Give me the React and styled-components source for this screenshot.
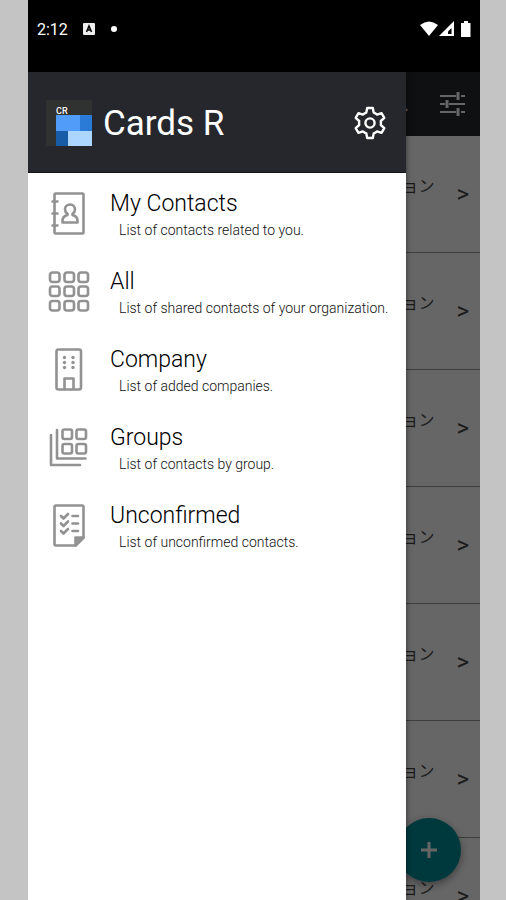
import React from 'react'
import styled, { createGlobalStyle } from 'styled-components'

const menu = [
  { id: 'contacts', title: 'My Contacts', text: 'List of contacts related to you.' },
  { id: 'all', title: 'All', text: 'List of shared contacts of your organization.' },
  { id: 'company', title: 'Company', text: 'List of added companies.' },
  { id: 'groups', title: 'Groups', text: 'List of contacts by group.' },
  { id: 'unconfirmed', title: 'Unconfirmed', text: 'List of unconfirmed contacts.' }
]

const rows = [1, 2, 3, 4, 5, 6, 7]

const icons = {
  contacts: (
    <>
      <rect x='6.5' y='1.5' width='29' height='40' rx='1' />
      <path d='M4.5 9.5h5M4.5 21.5h5M4.5 33.5h5' />
      <path d='M14.5 30.5v-2c0-3 1.500-4.500 5-5.500v-1.200c-1.800-1.200-2.500-2.600-2.500-4.300 0-3 2-5 5-5s5 2 5 5c0 1.700-.7 3.100-2.500 4.300V23c3.500 1 5 2.500 5 5.500v2z' />
    </>
  ),
  all: [2.5, 16.5, 31].map(y => [2, 16.5, 30.5].map(x => (
    <rect key={`${x}-${y}`} x={x} y={y} width='9.5' height='9.5' rx='2.5' />
  ))),
  company: (
    <>
      <rect x='8.5' y='1.5' width='24.5' height='40' rx='2' />
      <path d='M16.5 41V30.5h9V41' />
      <g fill='#929292' stroke='none'>
        {[9.5, 14.5, 19.5].map(y => [16.5, 25].map(x => (
          <circle key={`${x}-${y}`} cx={x} cy={y} r='1.7' />
        )))}
      </g>
    </>
  ),
  groups: (
    <>
      {[3.5, 18].map(y => [14.5, 28.5].map(x => (
        <rect key={`${x}-${y}`} x={x} y={y} width='9.5' height='9.5' rx='2' />
      )))}
      <path d='M9 4v28.500h28.500M3 9v30h29' />
    </>
  ),
  unconfirmed: (
    <>
      <path d='M8 1.500h26a1.500 1.500 0 0 1 1.500 1.500v30.500l-8 8H8A1.500 1.500 0 0 1 6.500 40V3A1.500 1.500 0 0 1 8 1.500z' />
      <path d='M35.500 33.500h-8v8z' fill='#929292' />
      {[12, 19.5, 27].map(y => (
        <path key={y} d={`M13 ${y}l2.500 2.500 4.500-4.500M24.500 ${y}h5.500`} />
      ))}
    </>
  )
}

const MenuIcon = ({ name }) => (
  <IconSvg viewBox='0 0 44 44' aria-hidden='true'>{icons[name]}</IconSvg>
)

const Logo = () => (
  <LogoSvg viewBox='0 0 46 46' role='img' aria-label='Cards R logo'>
    <rect width='46' height='46' fill='#303131' />
    <text x='10' y='14' fill='#fff' fontSize='9' fontWeight='500'>CR</text>
    <rect x='10' y='15' width='24' height='16' fill='#509cf8' />
    <rect x='34' y='15' width='12' height='16' fill='#2a7ad8' />
    <rect x='10' y='31' width='12' height='15' fill='#185ca8' />
    <rect x='22' y='31' width='24' height='15' fill='#acd6ff' />
  </LogoSvg>
)

const Gear = () => (
  <svg width='32' height='34' viewBox='0 0 32 34' fill='none' stroke='#fff' strokeWidth='2.4' strokeLinejoin='round' aria-hidden='true'>
    <path d='M13.200 2h5.600l.9 4.600c1.300.5 2.400 1.100 3.400 2l4.400-1.500 2.800 4.800-3.500 3.100c.2 1.300.2 2.700 0 4l3.500 3.100-2.800 4.800-4.400-1.500c-1 .9-2.100 1.500-3.400 2l-.9 4.600h-5.600l-.9-4.600c-1.300-.5-2.400-1.100-3.400-2l-4.400 1.500-2.800-4.800L5.200 19c-.2-1.300-.2-2.700 0-4l-3.500-3.100 2.800-4.800 4.400 1.500c1-.9 2.100-1.500 3.400-2z' />
    <circle cx='16' cy='17' r='4.6' />
  </svg>
)

const Tune = () => (
  <svg width='28' height='26' viewBox='0 0 28 26' fill='none' stroke='#fff' aria-hidden='true'>
    <path strokeWidth='2' d='M0 5h16M21 5h4M0 13h5M9 13h16M0 21h16M21 21h4' />
    <path strokeWidth='3' d='M18 1v8M7 9v8M18 17v8' />
  </svg>
)

const StatusIcons = () => (
  <svg width='52' height='18' viewBox='0 0 52 18' fill='#fff' aria-hidden='true'>
    <path d='M0 5Q9-2 18 5L9 16z' />
    <path d='M34 1v15H19z' />
    <path d='M31.500 8v6H28v-2.500z' fill='#000' />
    <path d='M42 3h2V1h4v2h2.500v14H41V3z' />
  </svg>
)

const NoticeIcon = () => (
  <svg width='12' height='12' viewBox='0 0 12 12' aria-hidden='true'>
    <rect width='12' height='12' rx='1' fill='#eee' />
    <path d='M3.500 9L6 3l2.500 6M4.500 7h3' fill='none' stroke='#000' strokeWidth='1.5' />
  </svg>
)

export default () => (
  <Frame>
    <GlobalStyle />
    <Phone>
      <StatusBar>
        <span>2:12</span>
        <NoticeIcon />
        <Dot />
        <StatusRight><StatusIcons /></StatusRight>
      </StatusBar>
      <Body>
        <Page>
          <Toolbar>
            <span>.</span>
            <IconButton aria-label='Filter'><Tune /></IconButton>
          </Toolbar>
          {rows.map(row => (
            <Row key={row}>
              <RowText>ョン</RowText>
              <Arrow>&gt;</Arrow>
            </Row>
          ))}
          <AddButton aria-label='Add'>
            <svg width='16' height='16' viewBox='0 0 16 16' stroke='#fff' strokeWidth='3' aria-hidden='true'>
              <path d='M8 0v16M0 8h16' />
            </svg>
          </AddButton>
        </Page>
        <Scrim />
        <Drawer>
          <DrawerHeader>
            <Logo />
            <AppName>Cards R</AppName>
            <IconButton aria-label='Settings'><Gear /></IconButton>
          </DrawerHeader>
          <Menu>
            {menu.map(item => (
              <li key={item.id}>
                <MenuLink href={`#${item.id}`}>
                  <MenuIcon name={item.id} />
                  <div>
                    <MenuTitle>{item.title}</MenuTitle>
                    <MenuText>{item.text}</MenuText>
                  </div>
                </MenuLink>
              </li>
            ))}
          </Menu>
        </Drawer>
      </Body>
    </Phone>
  </Frame>
)

const GlobalStyle = createGlobalStyle`
  * {
    box-sizing: border-box;
  }

  body {
    margin: 0;
    background: #c4c4c4;
    font-family: Roboto, 'Noto Sans CJK JP', sans-serif;
  }
`

const Frame = styled.div`
  height: 100vh;
  padding: 0 26px 0 28px;
`

const Phone = styled.div`
  display: flex;
  flex-direction: column;
  height: 100%;
  overflow: hidden;
`

const StatusBar = styled.div`
  display: flex;
  flex: none;
  align-items: center;
  height: 72px;
  padding: 0 8px 14px 9px;
  gap: 15px;
  background: #000;
  color: #fff;
  font-size: 16px;
`

const Dot = styled.span`
  width: 6px;
  height: 6px;
  margin-left: 1px;
  border-radius: 50%;
  background: #fff;
`

const StatusRight = styled.div`
  display: flex;
  margin-left: auto;
`

const Body = styled.div`
  position: relative;
  flex: 1;
  min-height: 0;
  overflow: hidden;
`

const Page = styled.main`
  height: 100%;
  overflow: hidden;
  background: #fff;
`

const Toolbar = styled.header`
  display: flex;
  align-items: center;
  justify-content: flex-end;
  height: 64px;
  padding-right: 12px;
  gap: 31px;
  background: #24282b;
  color: #fff;
  font-size: 20px;
`

const IconButton = styled.button`
  display: flex;
  padding: 0;
  border: 0;
  background: none;
`

const Row = styled.div`
  display: flex;
  justify-content: flex-end;
  height: 117px;
  padding: 39px 11px 0 0;
  gap: 22px;
  border-bottom: 1px solid #999;
  color: #444;
`

const RowText = styled.span`
  font-size: 16px;
  line-height: 24px;
`

const Arrow = styled.span`
  padding-top: 7px;
  font-size: 24px;
  line-height: 24px;
`

const AddButton = styled.button`
  position: absolute;
  right: 19px;
  bottom: 18px;
  display: flex;
  align-items: center;
  justify-content: center;
  width: 64px;
  height: 64px;
  padding: 0;
  border: 0;
  border-radius: 50%;
  background: #009099;
  box-shadow: 0 3px 8px rgba(0, 0, 0, 0.4);
`

const Scrim = styled.div`
  position: absolute;
  inset: 0;
  background: rgba(0, 0, 0, 0.6);
`

const Drawer = styled.nav`
  position: absolute;
  top: 0;
  bottom: 0;
  left: 0;
  width: calc(100% - 74px);
  background: #fff;
  box-shadow: 0 0 6px rgba(0, 0, 0, 0.5);
`

const DrawerHeader = styled.header`
  display: flex;
  align-items: center;
  height: 101px;
  padding: 2px 20px 0 18px;
  gap: 11px;
  background: #25272c;
  border-bottom: 1px solid #111317;
`

const LogoSvg = styled.svg`
  flex: none;
  width: 46px;
  height: 46px;
`

const AppName = styled.h1`
  flex: 1;
  margin: 0;
  padding-top: 2px;
  color: #fff;
  font-size: 35px;
  font-weight: 400;
  line-height: 44px;
`

const Menu = styled.ul`
  margin: 0;
  padding: 2px 0 0;
  list-style: none;
`

const MenuLink = styled.a`
  display: flex;
  align-items: center;
  height: 78px;
  padding-left: 20px;
  gap: 18px;
  color: #000;
  text-decoration: none;
`

const IconSvg = styled.svg`
  flex: none;
  width: 44px;
  height: 44px;
  fill: none;
  stroke: #929292;
  stroke-width: 2.6;
  stroke-linecap: round;
  stroke-linejoin: round;
`

const MenuTitle = styled.div`
  font-size: 23px;
  font-weight: 300;
  line-height: 32px;
`

const MenuText = styled.div`
  padding-left: 9px;
  color: #111;
  font-size: 14px;
  font-weight: 300;
  line-height: 20px;
  white-space: nowrap;
`
